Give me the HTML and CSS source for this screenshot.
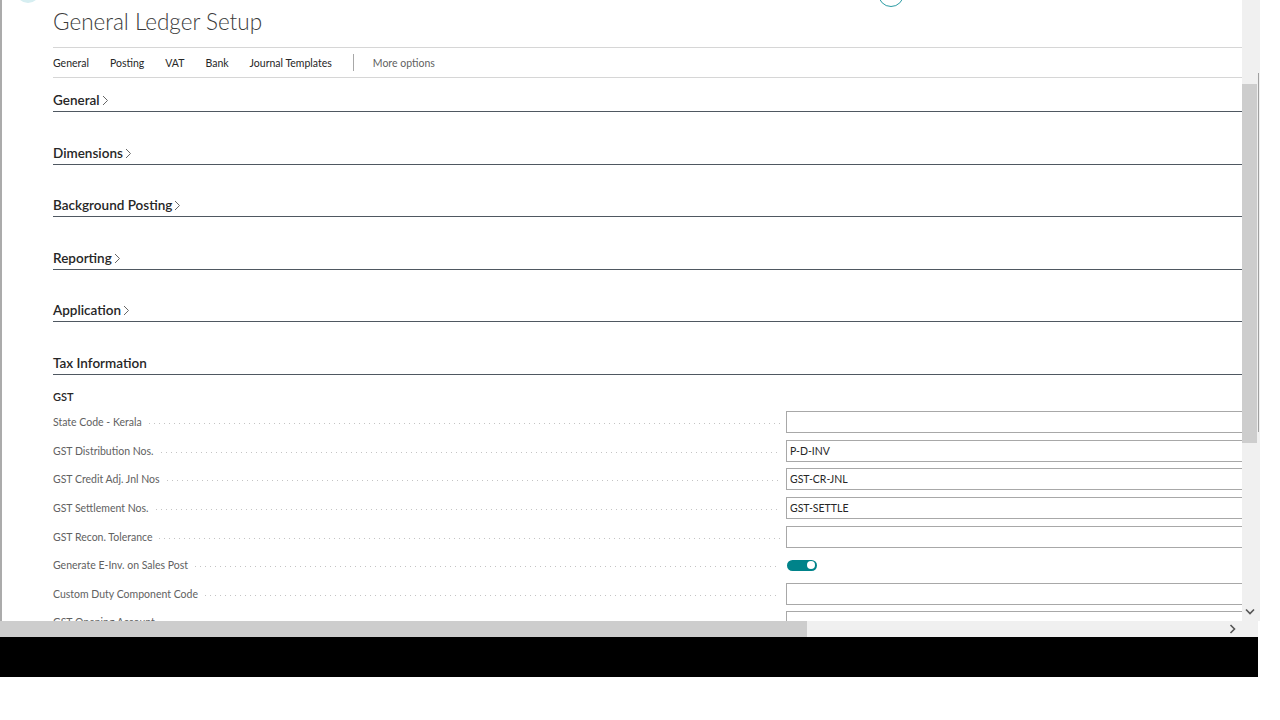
FILE: index.html
```html
<!DOCTYPE html>
<html lang="en">
<head>
    <meta charset="UTF-8">
    <title>General Ledger Setup</title>
    <link rel="stylesheet" href="styles.css">
</head>
<body>
    <div class="window">
        <div class="viewport">
            <div class="content">
                <span class="peek peek-left"></span>
                <span class="peek peek-teal"></span>
                <h1 class="title">General Ledger Setup</h1>
                <nav class="actions">
                    <a>General</a>
                    <a>Posting</a>
                    <a>VAT</a>
                    <a>Bank</a>
                    <a>Journal Templates</a>
                    <span class="sep"></span>
                    <a class="more">More options</a>
                </nav>

                <section class="fasttab"><h2>General<svg class="chev" width="7" height="11" viewBox="0 0 7 11"><path d="M1 1 L5.5 5.5 L1 10" fill="none" stroke="#666" stroke-width="1"/></svg></h2></section>
                <section class="fasttab"><h2>Dimensions<svg class="chev" width="7" height="11" viewBox="0 0 7 11"><path d="M1 1 L5.5 5.5 L1 10" fill="none" stroke="#666" stroke-width="1"/></svg></h2></section>
                <section class="fasttab"><h2>Background Posting<svg class="chev" width="7" height="11" viewBox="0 0 7 11"><path d="M1 1 L5.5 5.5 L1 10" fill="none" stroke="#666" stroke-width="1"/></svg></h2></section>
                <section class="fasttab"><h2>Reporting<svg class="chev" width="7" height="11" viewBox="0 0 7 11"><path d="M1 1 L5.5 5.5 L1 10" fill="none" stroke="#666" stroke-width="1"/></svg></h2></section>
                <section class="fasttab"><h2>Application<svg class="chev" width="7" height="11" viewBox="0 0 7 11"><path d="M1 1 L5.5 5.5 L1 10" fill="none" stroke="#666" stroke-width="1"/></svg></h2></section>
                <section class="fasttab">
                    <h2>Tax Information</h2>
                    <div class="group">GST</div>
                    <div class="field"><label>State Code - Kerala</label><div class="box"></div></div>
                    <div class="field"><label>GST Distribution Nos.</label><div class="box">P-D-INV</div></div>
                    <div class="field"><label>GST Credit Adj. Jnl Nos</label><div class="box">GST-CR-JNL</div></div>
                    <div class="field"><label>GST Settlement Nos.</label><div class="box">GST-SETTLE</div></div>
                    <div class="field"><label>GST Recon. Tolerance</label><div class="box"></div></div>
                    <div class="field"><label>Generate E-Inv. on Sales Post</label><div class="toggle-cell"><span class="toggle"></span></div></div>
                    <div class="field"><label>Custom Duty Component Code</label><div class="box"></div></div>
                    <div class="field"><label>GST Opening Account</label><div class="box"></div></div>
                </section>
            </div>
            <div class="vscroll">
                <div class="vthumb"></div>
                <span class="vline"></span>
                <svg class="arrow-down" width="10" height="7" viewBox="0 0 10 7"><path d="M1 1.5 L5 5.5 L9 1.5" fill="none" stroke="#555" stroke-width="1.6"/></svg>
            </div>
        </div>
        <div class="hscroll">
            <div class="hthumb"></div>
            <svg class="arrow-right" width="7" height="10" viewBox="0 0 7 10"><path d="M1.5 1 L5.5 5 L1.5 9" fill="none" stroke="#555" stroke-width="1.6"/></svg>
        </div>
        <div class="blackbar"></div>
    </div>
</body>
</html>
```

FILE: styles.css
```css
body {
    margin: 0;
    background: #fff;
    font-family: "Segoe UI", Lato, sans-serif;
    color: #212121;
}
.window {
    width: 1260px;
}
.viewport {
    display: flex;
    height: 621px;
    border-left: 2px solid #ababab;
    overflow: hidden;
}
.content {
    position: relative;
    flex: 1;
    padding-left: 51px;
    overflow: hidden;
}
.peek {
    position: absolute;
    border-radius: 50%;
}
.peek-left {
    left: 14px;
    top: -21px;
    width: 24px;
    height: 24px;
    background: #d6eef1;
}
.peek-teal {
    left: 876px;
    top: -19px;
    width: 24px;
    height: 24px;
    border: 1px solid #2b9ca4;
}
.title {
    margin: 0;
    padding-top: 7px;
    height: 48px;
    box-sizing: border-box;
    font-size: 22.5px;
    font-weight: 300;
    color: #3b3b3b;
    line-height: 30px;
    border-bottom: 1px solid #d6d6d6;
}
.actions {
    display: flex;
    align-items: center;
    height: 29px;
    border-bottom: 1px solid #d6d6d6;
    font-size: 10.5px;
    color: #262626;
}
.actions a {
    margin-right: 21px;
}
.actions .sep {
    width: 1px;
    height: 17px;
    background: #a8a8a8;
    margin: 0 19px 0 0;
}
.actions .more {
    color: #5f5f5f;
}
.fasttab {
    margin-top: 30.6px;
}
.actions + .fasttab {
    margin-top: 12px;
}
.fasttab h2 {
    margin: 0;
    font-size: 13.5px;
    font-weight: 600;
    line-height: 20px;
    padding-bottom: 1px;
    color: #262626;
    border-bottom: 1px solid #4f5861;
}
.chev {
    margin-left: 2px;
    vertical-align: -1px;
}
.group {
    margin-top: 12px;
    margin-bottom: 1px;
    font-size: 11px;
    line-height: 20px;
    font-weight: 600;
    color: #262626;
}
.field {
    display: flex;
    align-items: center;
    height: 28.6px;
}
.field label {
    flex: 0 0 733px;
    display: flex;
    align-items: center;
    font-size: 10.5px;
    color: #616161;
}
.field label::after {
    content: "";
    flex: 1;
    height: 1px;
    margin: 3px 6px 0 7px;
    background-image: linear-gradient(to right, #c4c4c4 1px, transparent 1px);
    background-size: 5px 1px;
}
.box {
    flex: 1;
    margin-right: -3px;
    height: 22px;
    box-sizing: border-box;
    border: 1px solid #a8a8a8;
    padding-left: 3px;
    font-size: 10.5px;
    line-height: 20px;
    color: #262626;
}
.toggle-cell {
    flex: 1;
    padding-left: 1px;
}
.toggle {
    display: block;
    position: relative;
    width: 30px;
    height: 11px;
    border-radius: 6px;
    background: #00838a;
}
.toggle::after {
    content: "";
    position: absolute;
    right: 2px;
    top: 1.5px;
    width: 8px;
    height: 8px;
    border-radius: 50%;
    background: #fff;
}
.vscroll {
    position: relative;
    width: 18px;
    background: #f0f0f0;
}
.vthumb {
    margin-top: 84px;
    width: 15px;
    height: 359px;
    background: #cdcdcd;
}
.vline {
    position: absolute;
    left: 16px;
    top: 73px;
    width: 1px;
    height: 359px;
    background: #a0a0a0;
}
.arrow-down {
    position: absolute;
    left: 3px;
    bottom: 6px;
}
.hscroll {
    position: relative;
    width: 1258px;
    height: 16px;
    background: #f0f0f0;
}
.hthumb {
    width: 807px;
    height: 16px;
    background: #cdcdcd;
}
.arrow-right {
    position: absolute;
    right: 22px;
    top: 3px;
}
.blackbar {
    width: 1258px;
    height: 40px;
    background: #000;
}
```
